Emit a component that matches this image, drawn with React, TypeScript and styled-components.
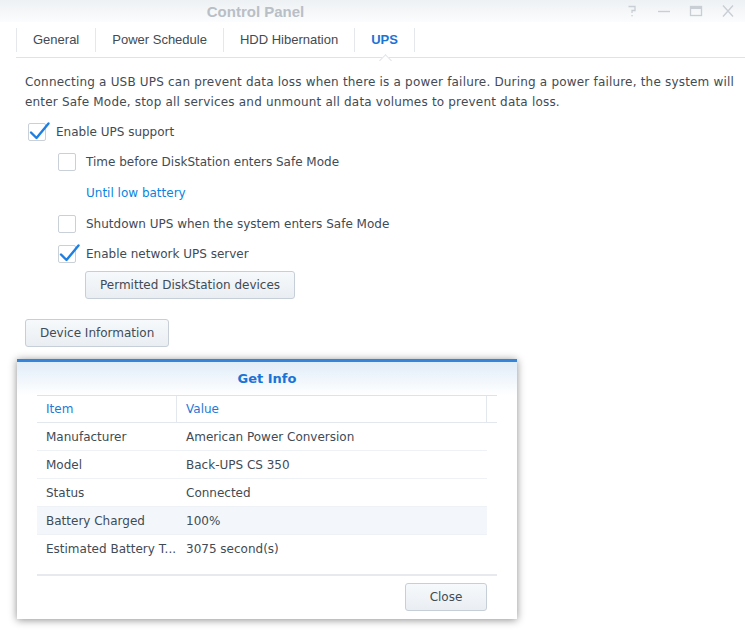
import React from "react";
import styled, { createGlobalStyle } from "styled-components";

const Global = createGlobalStyle`
  html, body { margin: 0; padding: 0; background: #ffffff; }
  body { width: 745px; height: 630px; overflow: hidden; }
  * { box-sizing: border-box; }
`;

const Window = styled.div`
  position: relative;
  width: 745px;
  height: 630px;
  background: #fff;
  font-family: "DejaVu Sans", Verdana, sans-serif;
  font-size: 12px;
  color: #414b55;
`;

const TitleBar = styled.div`
  height: 22px;
  display: flex;
  align-items: center;
  background: linear-gradient(#eef1f4, #fbfcfd);
`;

const Title = styled.div`
  width: 511px;
  text-align: center;
  font-family: "Liberation Sans", Arial, sans-serif;
  font-weight: bold;
  font-size: 15px;
  color: #b9bfc6;
`;

const Controls = styled.div`
  margin-left: auto;
  display: flex;
  gap: 14px;
  padding-right: 8px;
  align-items: center;
`;

const Ctl = styled.svg`
  width: 18px;
  height: 14px;
  display: block;
`;

const TabBar = styled.div`
  margin-left: 16px;
  height: 36px;
  display: flex;
  align-items: center;
  border-bottom: 1px solid #dfe3e8;
  position: relative;
  background: #fff;
`;

const Tab = styled.div<{ $active?: boolean; $last?: boolean }>`
  position: relative;
  height: 24px;
  display: flex;
  align-items: center;
  padding: 0 16px;
  border-left: 1px solid #e4e8ec;
  ${(p) => (p.$last ? "border-right: 1px solid #e4e8ec;" : "")}
  font-family: "Liberation Sans", Arial, sans-serif;
  font-size: 13px;
  font-weight: ${(p) => (p.$active ? "bold" : "normal")};
  color: ${(p) => (p.$active ? "#1a73d6" : "#414b55")};
`;

const Notch = styled.div`
  position: absolute;
  left: 50%;
  bottom: -13px;
  width: 9px;
  height: 9px;
  margin-left: -4px;
  background: #fff;
  border-left: 1px solid #dfe3e8;
  border-top: 1px solid #dfe3e8;
  transform: rotate(45deg);
`;

const Content = styled.div`
  padding: 14px 0 0 25px;
`;

const Desc = styled.p`
  margin: 0 0 5px;
  width: 716px;
  line-height: 20px;
  letter-spacing: 0.19px;
`;

const Row = styled.div<{ $indent?: number }>`
  height: 30px;
  display: flex;
  align-items: center;
  gap: 10px;
  padding-left: ${(p) => p.$indent ?? 0}px;
`;

const Box = styled.span`
  position: relative;
  width: 18px;
  height: 18px;
  border: 1px solid #c9d0d7;
  border-radius: 2px;
  background: #fff;
  flex: none;
`;

const Check = styled.svg`
  position: absolute;
  left: -1px;
  top: -3px;
  width: 22px;
  height: 21px;
  overflow: visible;
`;

const Link = styled.div`
  height: 32px;
  display: flex;
  align-items: center;
  padding-left: 61px;
  color: #0a84e0;
`;

const Button = styled.button<{ $ml?: number; $mt?: number; $w?: number }>`
  display: block;
  height: 28px;
  padding: 0 14px;
  margin-left: ${(p) => p.$ml ?? 0}px;
  margin-top: ${(p) => p.$mt ?? 0}px;
  ${(p) => (p.$w ? `width: ${p.$w}px;` : "")}
  border: 1px solid #c6cfd8;
  border-radius: 3px;
  background: linear-gradient(#f7f9fb, #e9eef3);
  font-family: "DejaVu Sans", Verdana, sans-serif;
  font-size: 12px;
  color: #414b55;
`;

const Modal = styled.div`
  position: absolute;
  left: 17px;
  top: 359px;
  width: 500px;
  height: 260px;
  background: #fff;
  border-top: 3px solid #3584dc;
  box-shadow: 0 1px 8px rgba(0, 0, 0, 0.45);
  display: flex;
  flex-direction: column;
`;

const ModalHead = styled.div`
  height: 33px;
  display: flex;
  align-items: center;
  justify-content: center;
  font-weight: bold;
  font-size: 13px;
  color: #1a73d6;
  background: linear-gradient(#e0ecf8, #ffffff);
`;

const Table = styled.div`
  margin: 0 20px;
  border-top: 1px solid #dde3ea;
`;

const HeadRow = styled.div`
  display: grid;
  grid-template-columns: 140px 310px 10px;
  height: 27px;
  border-bottom: 1px solid #e3e8ee;
  color: #1f7ad6;
`;

const HeadCell = styled.div<{ $sep?: boolean }>`
  display: flex;
  align-items: center;
  padding-left: 9px;
  ${(p) => (p.$sep ? "border-right: 1px solid #e3e8ee;" : "")}
`;

const BodyRow = styled.div<{ $hl?: boolean }>`
  display: grid;
  grid-template-columns: 140px 310px;
  height: 28px;
  width: 450px;
  border-bottom: 1px solid ${(p) => (p.$hl ? "#eef2f7" : "#eef1f5")};
  background: ${(p) => (p.$hl ? "#f3f7fc" : "#fff")};
`;

const LastRow = styled(BodyRow)`
  border-bottom: none;
`;

const Cell = styled.div`
  display: flex;
  align-items: center;
  padding-left: 9px;
  white-space: nowrap;
  overflow: hidden;
`;

const Footer = styled.div`
  margin: 11px 20px 0;
  border-top: 2px solid #e6e9ed;
  display: flex;
  justify-content: flex-end;
  padding: 7px 10px 0 0;
`;

const CheckMark = () => (
  <Check viewBox="0 0 22 21">
    <path d="M3 11.5 L8.5 17 L20.5 2.5" fill="none" stroke="#1e7fe0" strokeWidth="2.4" strokeLinecap="round" strokeLinejoin="round" />
  </Check>
);

const CheckRow = ({ checked, indent, label }: { checked?: boolean; indent?: number; label: string }) => (
  <Row $indent={indent}>
    <Box>{checked && <CheckMark />}</Box>
    <span>{label}</span>
  </Row>
);

const rows: [string, string][] = [
  ["Manufacturer", "American Power Conversion"],
  ["Model", "Back-UPS CS 350"],
  ["Status", "Connected"],
  ["Battery Charged", "100%"],
];

export default function App() {
  return (
    <Window>
      <Global />
      <TitleBar>
        <Title>Control Panel</Title>
        <Controls>
          <Ctl viewBox="0 0 18 14">
            <path d="M5.5 2.5 H12 V6.5 H9 V9" fill="none" stroke="#c9ced4" strokeWidth="1.3" />
            <rect x="8.4" y="11" width="1.3" height="1.3" fill="#c9ced4" />
          </Ctl>
          <Ctl viewBox="0 0 18 14">
            <path d="M3 7.5 H15" stroke="#c9ced4" strokeWidth="1.4" />
          </Ctl>
          <Ctl viewBox="0 0 18 14">
            <rect x="3.5" y="2.5" width="11" height="9" fill="none" stroke="#c9ced4" strokeWidth="1.3" />
            <path d="M3.5 4 H14.5" stroke="#c9ced4" strokeWidth="2" />
          </Ctl>
          <Ctl viewBox="0 0 18 14">
            <path d="M4 1.5 L14 12.5 M14 1.5 L4 12.5" stroke="#c9ced4" strokeWidth="1.3" />
          </Ctl>
        </Controls>
      </TitleBar>
      <TabBar>
        <Tab>General</Tab>
        <Tab>Power Schedule</Tab>
        <Tab>HDD Hibernation</Tab>
        <Tab $active $last>
          UPS
          <Notch />
        </Tab>
      </TabBar>
      <Content>
        <Desc>
          Connecting a USB UPS can prevent data loss when there is a power failure. During a power failure, the system will enter Safe Mode, stop all services and unmount all data volumes to prevent data loss.
        </Desc>
        <CheckRow checked indent={3} label="Enable UPS support" />
        <CheckRow indent={33} label="Time before DiskStation enters Safe Mode" />
        <Link>Until low battery</Link>
        <CheckRow indent={33} label="Shutdown UPS when the system enters Safe Mode" />
        <CheckRow checked indent={33} label="Enable network UPS server" />
        <Button $ml={60} $mt={2}>Permitted DiskStation devices</Button>
        <Button $mt={20}>Device Information</Button>
      </Content>
      <Modal>
        <ModalHead>Get Info</ModalHead>
        <Table>
          <HeadRow>
            <HeadCell $sep>Item</HeadCell>
            <HeadCell $sep>Value</HeadCell>
            <HeadCell />
          </HeadRow>
          {rows.map(([k, v]) => (
            <BodyRow key={k} $hl={k === "Battery Charged"}>
              <Cell>{k}</Cell>
              <Cell>{v}</Cell>
            </BodyRow>
          ))}
          <LastRow>
            <Cell>Estimated Battery T...</Cell>
            <Cell>3075 second(s)</Cell>
          </LastRow>
        </Table>
        <Footer>
          <Button $w={82}>Close</Button>
        </Footer>
      </Modal>
    </Window>
  );
}
